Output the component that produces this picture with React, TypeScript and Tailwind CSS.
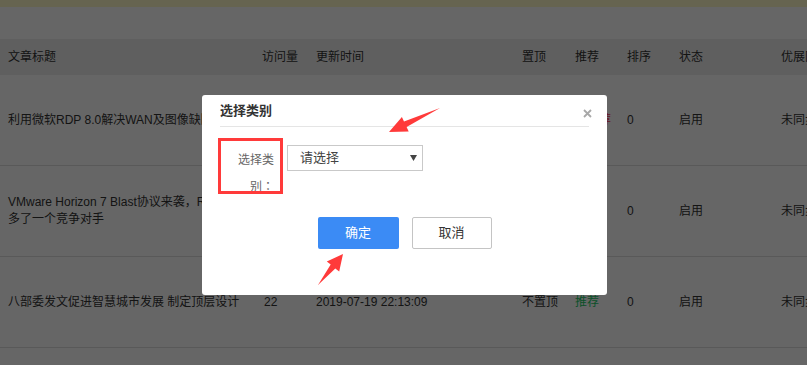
import type { ReactNode } from "react";

const COLS = "grid grid-cols-[262px_54px_206px_53px_52px_52px_102px_1fr] items-center";

type Article = {
  title: ReactNode;
  views: string;
  time: string;
  top: string;
  rec: string;
  recTone: "green" | "red";
  order: string;
  status: string;
  sync: string;
};

const ARTICLES: Article[] = [
  {
    title: "利用微软RDP 8.0解决WAN及图像缺陷",
    views: "18",
    time: "2019-07-19 22:15:41",
    top: "不置顶",
    rec: "不推荐",
    recTone: "red",
    order: "0",
    status: "启用",
    sync: "未同步",
  },
  {
    title: (
      <>
        VMware Horizon 7 Blast协议来袭，RDP
        <br />
        多了一个竞争对手
      </>
    ),
    views: "31",
    time: "2019-07-19 22:14:27",
    top: "不置顶",
    rec: "推荐",
    recTone: "green",
    order: "0",
    status: "启用",
    sync: "未同步",
  },
  {
    title: "八部委发文促进智慧城市发展 制定顶层设计",
    views: "22",
    time: "2019-07-19 22:13:09",
    top: "不置顶",
    rec: "推荐",
    recTone: "green",
    order: "0",
    status: "启用",
    sync: "未同步",
  },
];

const HEADERS = ["文章标题", "访问量", "更新时间", "置顶", "推荐", "排序", "状态", "优展同步"];

function ArticleTable() {
  return (
    <div className="text-[12px] text-[#333]">
      <div className="h-[7px] bg-[#fffbc8]" />
      <div className="h-[32px] bg-white" />
      <div className={`${COLS} h-[36px] bg-[#eeeeee] whitespace-nowrap`}>
        {HEADERS.map((h, i) => (
          <div key={h} className={i === 0 ? "pl-2" : "overflow-hidden"}>
            {h}
          </div>
        ))}
      </div>
      {ARTICLES.map((a, i) => (
        <div key={i} className={`${COLS} h-[91px] border-b border-[#dedede] whitespace-nowrap`}>
          <div className="overflow-hidden pl-2 pr-1 leading-[17px]">{a.title}</div>
          <div className="pl-[2px]">{a.views}</div>
          <div>{a.time}</div>
          <div>{a.top}</div>
          <div className={a.recTone === "green" ? "text-[#22c96a]" : "text-[#ff3355]"}>{a.rec}</div>
          <div>{a.order}</div>
          <div>{a.status}</div>
          <div className="overflow-hidden">{a.sync}</div>
        </div>
      ))}
      <div className={`${COLS} h-[91px] border-b border-[#dedede]`} />
    </div>
  );
}

function CategoryDialog() {
  return (
    <div className="absolute left-[202px] top-[95px] w-[405px] h-[200px] rounded-[3px] bg-white px-[18px]">
      <div className="flex h-[32px] items-center border-b border-[#e5e5e5] text-[13px] font-bold text-[#333]">
        选择类别
      </div>
      <button className="absolute right-[15px] top-[14px] flex h-[9px] w-[9px] items-center justify-center">
        <svg width="9" height="9" viewBox="0 0 9 9">
          <path d="M1 1L8 8M8 1L1 8" stroke="#a8a8a8" strokeWidth="1.8" />
        </svg>
      </button>

      <div className="mt-[18px] flex items-start">
        <label className="ml-[12px] w-[42px] text-right text-[12px] leading-[27px] text-[#666] font-['Noto_Sans_CJK_SC',sans-serif]">
          选择类别<span className="font-['Noto_Sans_CJK_TC',sans-serif]">：</span>
        </label>
        <div className="ml-[13px] flex h-[26px] w-[136px] items-center justify-between border border-[#c9c9c9] pl-[12px] pr-[5px] text-[13px] text-[#444]">
          <span>请选择</span>
          <svg width="7" height="6" viewBox="0 0 7 6">
            <path d="M0 0H7L3.5 6Z" fill="#444" />
          </svg>
        </div>
      </div>

      <div className="mt-[18px] flex justify-center gap-[13px] text-[13px]">
        <button className="h-[32px] w-[81px] rounded-[2px] bg-[#3b8bf5] text-white">确定</button>
        <button className="h-[32px] w-[80px] rounded-[2px] border border-[#c4c4c4] bg-white text-[#333]">取消</button>
      </div>
    </div>
  );
}

function Annotations() {
  return (
    <>
      <div className="absolute left-[218px] top-[138px] h-[56px] w-[65px] border-[3px] border-[#ff3a3a]" />
      <svg className="pointer-events-none absolute inset-0" width="807" height="365" viewBox="0 0 807 365">
        <polygon
          points="440,108 404,121.6 401.9,117.1 389,132 408.7,131.5 406.6,127"
          fill="#ff3a3a"
        />
        <polygon
          points="318,285 335.3,268.4 339.2,271.5 343,254 326.8,261.5 330.7,264.6"
          fill="#ff3a3a"
        />
      </svg>
    </>
  );
}

export default function App() {
  return (
    <div className="relative h-[365px] w-[807px] overflow-hidden bg-white font-['Liberation_Sans','Noto_Sans_CJK_SC',sans-serif]">
      <ArticleTable />
      <div className="absolute inset-0 bg-black/60" />
      <CategoryDialog />
      <Annotations />
    </div>
  );
}
